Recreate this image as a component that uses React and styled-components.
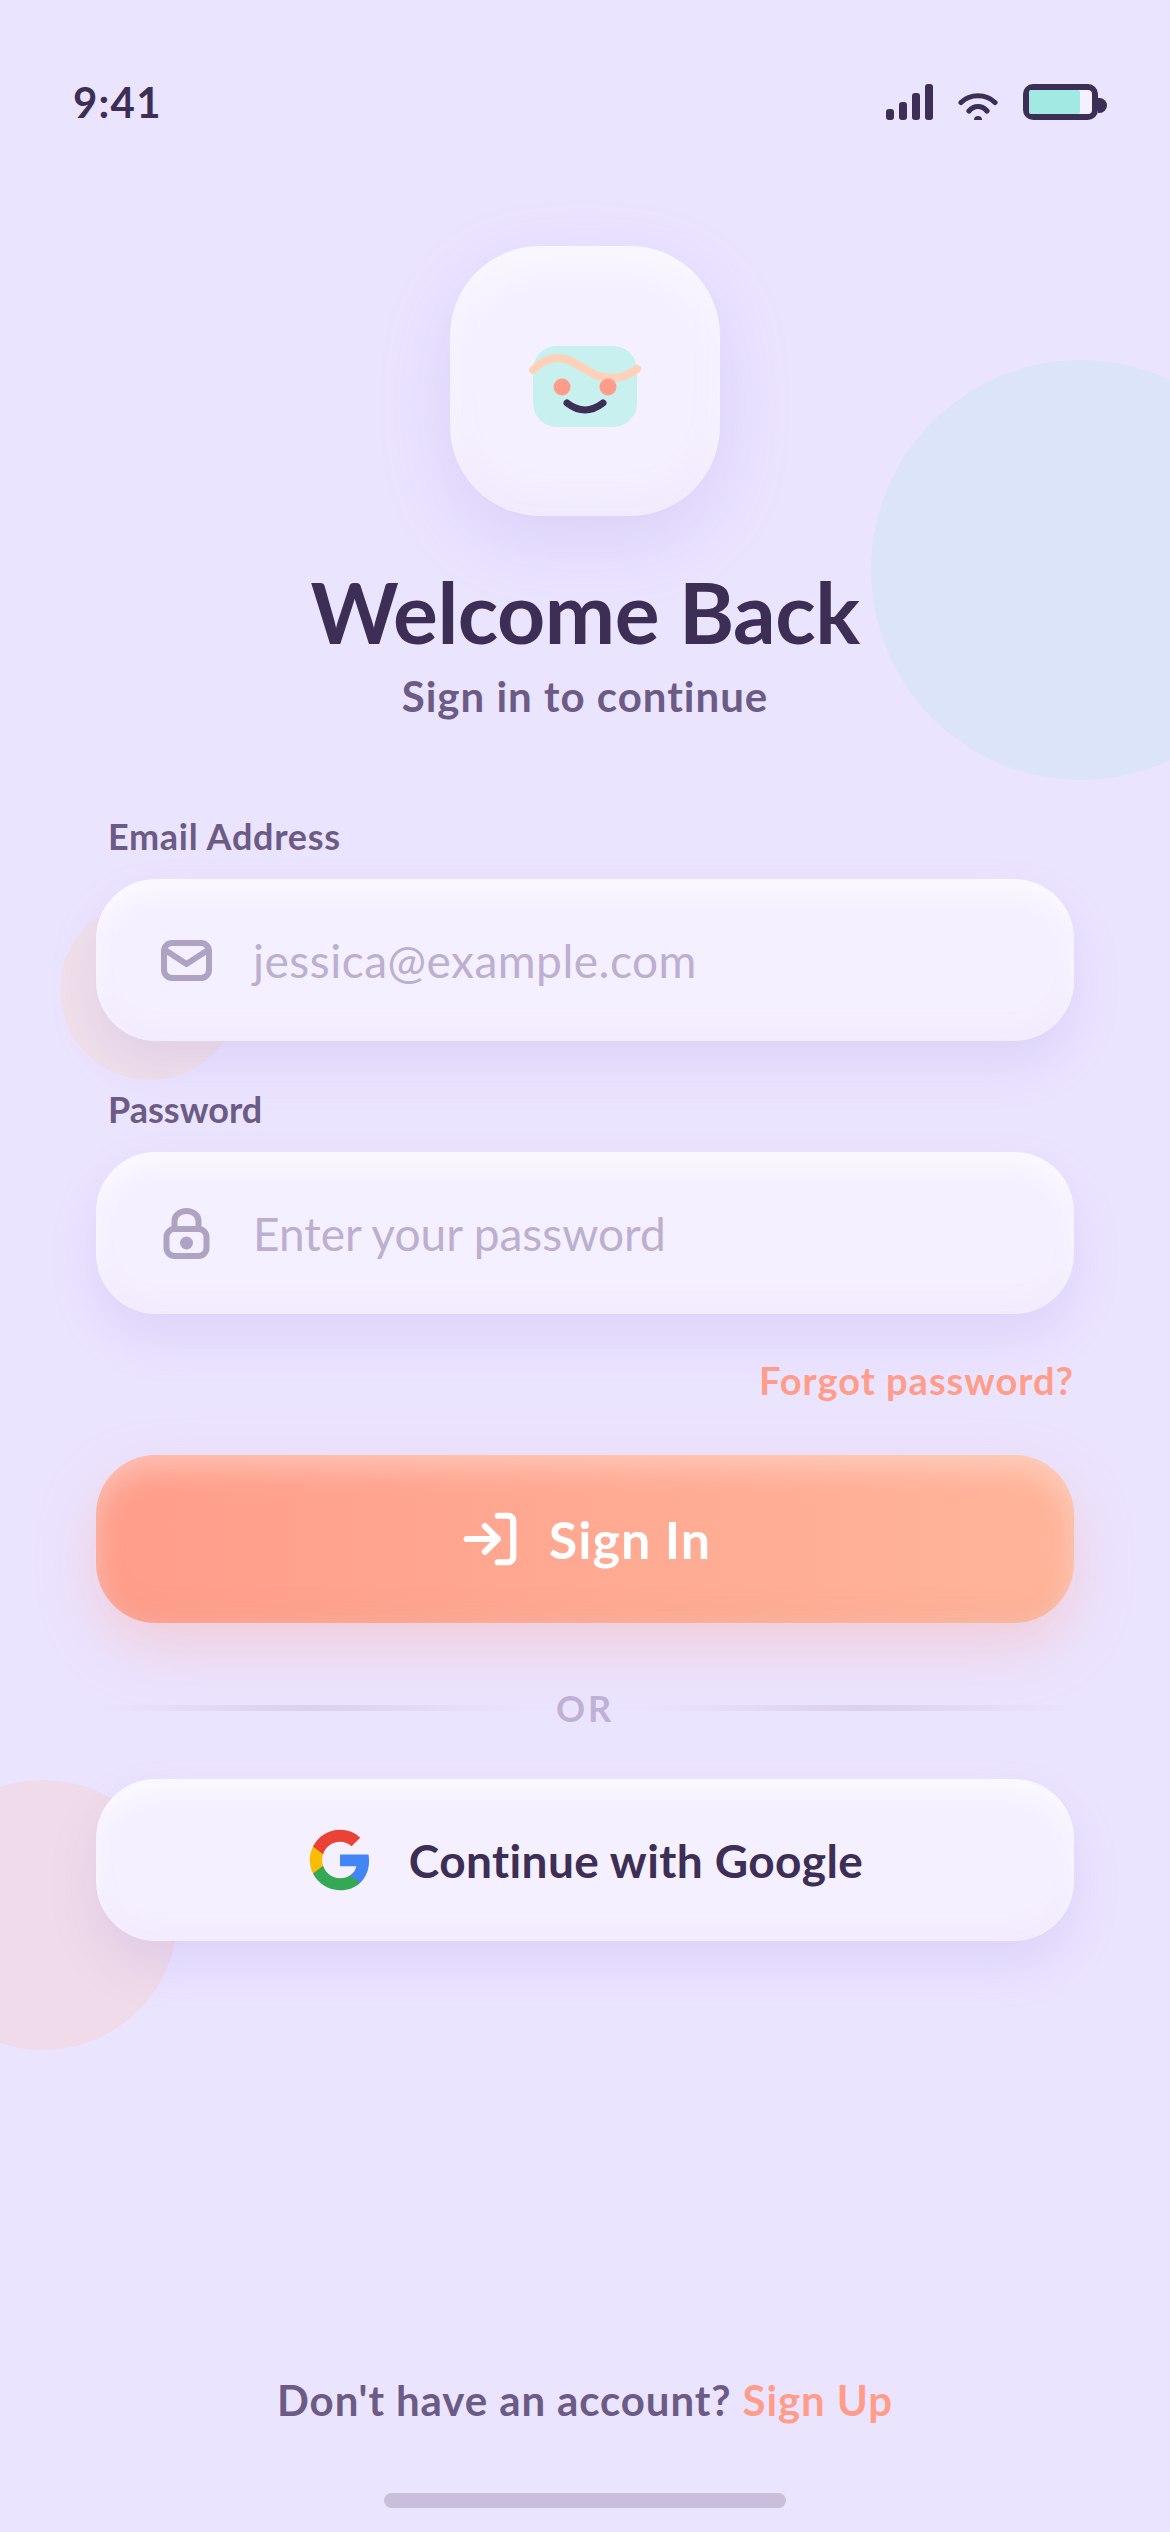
import React from "react"
import styled, { createGlobalStyle } from "styled-components"
import { LogIn } from "lucide-react"

const GlobalStyle = createGlobalStyle`
  html, body {
    margin: 0;
    padding: 0;
    background: #ebe4ff;
  }
  * {
    box-sizing: border-box;
  }
`

const Page = styled.div`
  position: relative;
  width: 1170px;
  height: 2532px;
  overflow: hidden;
  display: flex;
  flex-direction: column;
  background: #ebe4ff;
  font-family: Lato, "Open Sans", sans-serif;
  color: #3d2e55;
`
const Blob = styled.div`
  position: absolute;
  left: ${(p) => p.$left}px;
  top: ${(p) => p.$top}px;
  width: ${(p) => p.$size}px;
  height: ${(p) => p.$size}px;
  border-radius: 50%;
  background: ${(p) => p.$color};
`
const StatusBar = styled.div`
  position: relative;
  height: 246px;
  padding: 78px 63px 0 73px;
  display: flex;
  justify-content: space-between;
  align-items: flex-start;
`
const Time = styled.div`
  font-size: 42px;
  line-height: 48px;
  font-weight: 700;
  letter-spacing: 1.2px;
`
const StatusIcons = styled.div`
  display: flex;
  align-items: flex-end;
  gap: 25px;
  padding-top: 6px;
`
const Main = styled.div`
  position: relative;
  flex: 1;
  display: flex;
  flex-direction: column;
  padding: 0 96px;
`
const LogoBox = styled.div`
  align-self: center;
  width: 270px;
  height: 270px;
  border-radius: 90px;
  padding-top: 8px;
  display: flex;
  align-items: center;
  justify-content: center;
  background: #f5f0ff;
  box-shadow: 0 24px 72px rgba(150, 125, 220, 0.2),
    inset 0 18px 36px rgba(255, 255, 255, 0.6),
    inset 0 -18px 36px rgba(150, 125, 220, 0.06);
`
const Title = styled.h1`
  margin: 46px 0 0;
  font-size: 84px;
  line-height: 100px;
  font-weight: 700;
  letter-spacing: -0.5px;
  text-align: center;
`
const Subtitle = styled.p`
  margin: 8px 0 0;
  font-size: 42px;
  line-height: 52px;
  font-weight: 700;
  letter-spacing: 1px;
  text-align: center;
  color: #6b5b85;
`
const Label = styled.label`
  display: block;
  margin: ${(p) => p.$top}px 0 0 12px;
  font-size: 36px;
  line-height: 44px;
  font-weight: 700;
  letter-spacing: ${(p) => p.$spacing}px;
  color: #6b5b85;
`
const Field = styled.div`
  margin-top: 21px;
  height: 162px;
  border-radius: 60px;
  display: flex;
  align-items: center;
  gap: 41px;
  padding-left: 65px;
  background: #f5f0ff;
  box-shadow: 0 24px 48px rgba(150, 125, 220, 0.16),
    inset 0 12px 24px rgba(255, 255, 255, 0.7),
    inset 0 -12px 24px rgba(150, 125, 220, 0.05);
`
const FieldIcon = styled.svg`
  width: 51px;
  height: 51px;
  flex: none;
  color: #afa3c3;
`
const Placeholder = styled.span`
  font-size: 46px;
  letter-spacing: ${(p) => p.$spacing}px;
  color: #bcafcf;
`
const Forgot = styled.a`
  align-self: flex-end;
  margin-top: 42px;
  font-size: 38px;
  line-height: 48px;
  font-weight: 700;
  letter-spacing: 1px;
  color: #ff9d8a;
`
const Primary = styled.button`
  margin-top: 51px;
  height: 168px;
  border: 0;
  border-radius: 60px;
  display: flex;
  align-items: center;
  justify-content: center;
  gap: 28px;
  color: #fff;
  font-family: inherit;
  font-size: 52px;
  font-weight: 700;
  letter-spacing: 1px;
  background: linear-gradient(90deg, #ff9d8a, #ffb59a);
  box-shadow: 0 24px 60px rgba(255, 157, 138, 0.32),
    inset 0 12px 30px rgba(255, 255, 255, 0.38),
    inset 0 -12px 30px rgba(180, 130, 130, 0.08);
`
const Divider = styled.div`
  margin-top: 60px;
  height: 50px;
  display: flex;
  align-items: center;
  gap: 34px;
  color: #bfb1d5;
  font-size: 36px;
  font-weight: 700;
  letter-spacing: 3px;
`
const Rule = styled.div`
  flex: 1;
  height: 6px;
  background: linear-gradient(90deg, transparent, #dcd0ec, transparent);
`
const GoogleButton = styled.button`
  margin-top: 46px;
  height: 162px;
  border: 0;
  border-radius: 60px;
  display: flex;
  align-items: center;
  justify-content: center;
  gap: 36px;
  color: #3d2e55;
  font-family: inherit;
  font-size: 46px;
  font-weight: 700;
  letter-spacing: 0.4px;
  background: #f5f0ff;
  box-shadow: 0 24px 48px rgba(150, 125, 220, 0.16),
    inset 0 12px 24px rgba(255, 255, 255, 0.7),
    inset 0 -12px 24px rgba(150, 125, 220, 0.05);
`
const Footer = styled.div`
  margin-top: auto;
  text-align: center;
  font-size: 42px;
  line-height: 56px;
  font-weight: 700;
  letter-spacing: 0.9px;
  color: #6b5b85;
`
const SignUp = styled.a`
  color: #ff9d8a;
`
const HomeBar = styled.div`
  align-self: center;
  margin: 65px 0 24px;
  width: 402px;
  height: 15px;
  border-radius: 8px;
  background: #c9bfdc;
`

const Signal = () => (
  <svg width="47" height="36" viewBox="0 0 47 36" fill="#3d2e55">
    <rect x="0" y="25" width="8" height="11" rx="3" />
    <rect x="13" y="18" width="8" height="18" rx="3" />
    <rect x="26" y="9" width="8" height="27" rx="3" />
    <rect x="39" y="0" width="8" height="36" rx="3" />
  </svg>
)

const Wifi = () => (
  <svg width="40" height="28" viewBox="0 0 40 28" fill="none" stroke="#3d2e55" strokeWidth="5.2" strokeLinecap="round">
    <path d="M3 10.5 C12 1.5 28 1.5 37 10.5" />
    <path d="M11 19 C16 13 24 13 29 19" />
    <path d="M16 28 a4 4 0 0 1 8 0 z" fill="#3d2e55" stroke="none" />
  </svg>
)

const Battery = () => (
  <svg width="84" height="36" viewBox="0 0 84 36">
    <rect x="3" y="3" width="69" height="30" rx="7" fill="#f5f0ff" stroke="#3d2e55" strokeWidth="6" />
    <rect x="6" y="6" width="51" height="24" rx="2" fill="#a3e9e3" />
    <path d="M75 14 h1.5 a7.5 7.5 0 0 1 0 15 h-1.5 z" fill="#3d2e55" />
  </svg>
)

const LogoMark = () => (
  <svg width="120" height="90" viewBox="0 0 120 90" fill="none">
    <rect x="8" y="6" width="104" height="81" rx="24" fill="#c7f0ef" />
    <path d="M8 30 C16 22 24 18 33 18 C52 18 62 38 87 38 C96 38 104 35 112 29" stroke="#ffd1b8" strokeWidth="8" strokeLinecap="round" />
    <circle cx="37" cy="47" r="8.5" fill="#ff9d8a" />
    <circle cx="83" cy="47" r="8.5" fill="#ff9d8a" />
    <path d="M42 63 Q60 77 78 63" stroke="#3d2e55" strokeWidth="7" strokeLinecap="round" />
  </svg>
)

const MailIcon = () => (
  <FieldIcon viewBox="0 0 51 51" fill="none" stroke="currentColor" strokeWidth="6" strokeLinejoin="round">
    <rect x="3" y="8" width="45" height="35" rx="8" />
    <path d="M4 15 L25.5 29 L47 15" />
  </FieldIcon>
)

const LockIcon = () => (
  <FieldIcon viewBox="0 0 51 51" fill="none" stroke="currentColor" strokeWidth="6">
    <rect x="5.5" y="21" width="40" height="27" rx="8" />
    <path d="M13.5 21 V13 a12 10 0 0 1 24 0 V21" />
    <circle cx="25.5" cy="35" r="6.5" fill="currentColor" stroke="none" />
  </FieldIcon>
)

const GoogleIcon = () => (
  <svg width="66" height="66" viewBox="0 0 24 24">
    <path fill="#4285f4" d="M22.56 12.25c0-.78-.07-1.53-.2-2.25H12v4.26h5.92c-.26 1.37-1.04 2.53-2.21 3.31v2.77h3.57c2.08-1.92 3.28-4.74 3.28-8.09z" />
    <path fill="#34a853" d="M12 23c2.97 0 5.46-.98 7.28-2.66l-3.57-2.77c-.98.66-2.23 1.06-3.71 1.06-2.86 0-5.29-1.93-6.16-4.53H2.18v2.84C3.99 20.53 7.7 23 12 23z" />
    <path fill="#fbbc05" d="M5.84 14.09c-.22-.66-.35-1.36-.35-2.09s.13-1.43.35-2.09V7.07H2.18C1.43 8.55 1 10.22 1 12s.43 3.45 1.18 4.93l2.85-2.22.81-.62z" />
    <path fill="#ea4335" d="M12 5.38c1.62 0 3.06.56 4.21 1.64l3.15-3.15C17.45 2.09 14.97 1 12 1 7.7 1 3.99 3.47 2.18 7.07l3.66 2.84c.87-2.6 3.3-4.53 6.16-4.53z" />
  </svg>
)

export default function App() {
  return (
    <Page>
      <GlobalStyle />
      <Blob $left={871} $top={360} $size={420} $color="#dbe4f9" />
      <Blob $left={60} $top={900} $size={180} $color="#f0e0ea" />
      <Blob $left={-92} $top={1780} $size={270} $color="#efdbe9" />

      <StatusBar>
        <Time>9:41</Time>
        <StatusIcons>
          <Signal />
          <Wifi />
          <Battery />
        </StatusIcons>
      </StatusBar>

      <Main>
        <LogoBox>
          <LogoMark />
        </LogoBox>
        <Title>Welcome Back</Title>
        <Subtitle>Sign in to continue</Subtitle>

        <Label $top={92} $spacing={0.7}>Email Address</Label>
        <Field>
          <MailIcon />
          <Placeholder $spacing={0.5}>jessica@example.com</Placeholder>
        </Field>

        <Label $top={46} $spacing={0}>Password</Label>
        <Field>
          <LockIcon />
          <Placeholder $spacing={0}>Enter your password</Placeholder>
        </Field>

        <Forgot>Forgot password?</Forgot>

        <Primary>
          <LogIn size={62} strokeWidth={2.4} />
          Sign In
        </Primary>

        <Divider>
          <Rule />
          OR
          <Rule />
        </Divider>

        <GoogleButton>
          <GoogleIcon />
          Continue with Google
        </GoogleButton>

        <Footer>
          Don't have an account? <SignUp>Sign Up</SignUp>
        </Footer>
        <HomeBar />
      </Main>
    </Page>
  )
}
